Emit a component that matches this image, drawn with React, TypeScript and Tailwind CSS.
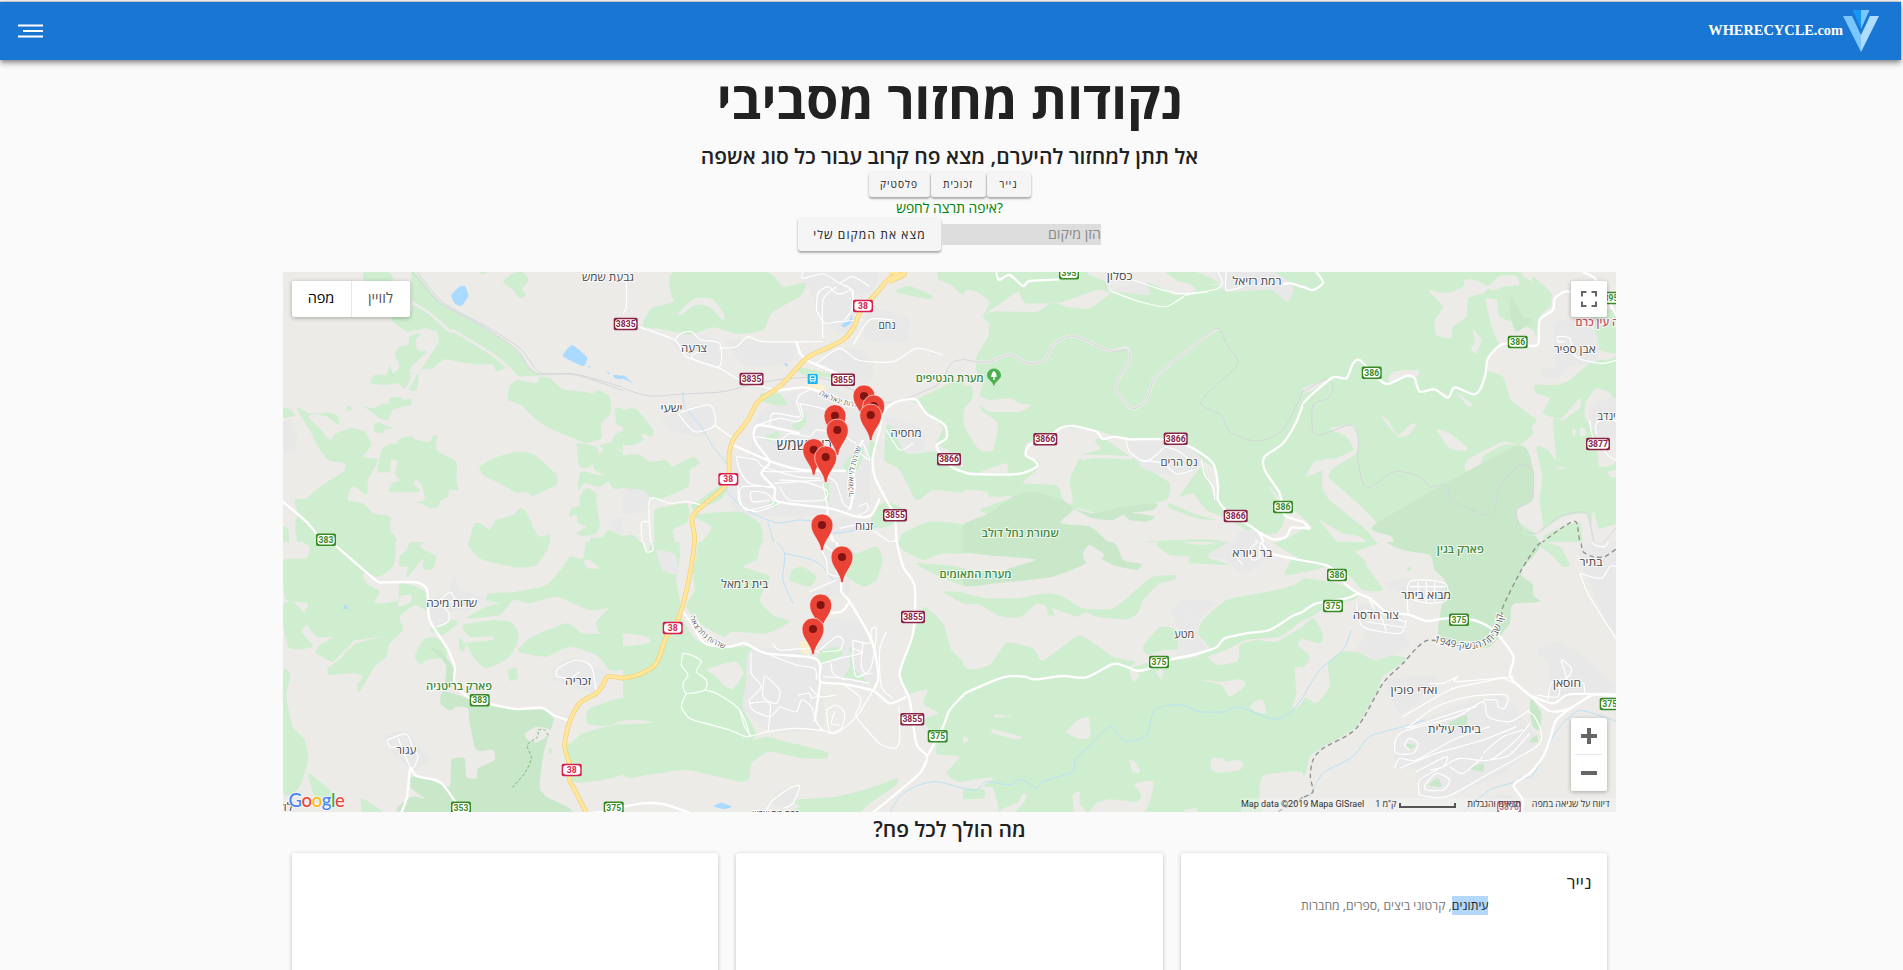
import React from "react";

type Kind = "land" | "green" | "park" | "urban" | "water" | "sand";
type Line = "major" | "minor" | "highway" | "rail" | "stream" | "border" | "trail" | "track";
type Tile = {
  id: string;
  x: number;
  y: number;
  base: Kind;
  areas: [Kind, string[]][];
  lines: [Line, string[]][];
};

const FILL: Record<Kind, string> = {
  land: "#ecebe8",
  green: "#ceeecf",
  park: "#c8e8c9",
  urban: "#e8e8e8",
  water: "#aadaff",
  sand: "#fbf0cf",
};

const STROKE: Record<Line, { color: string; width: number; dash?: string }> = {
  major: { color: "#ffffff", width: 7 },
  minor: { color: "#ffffff", width: 3.5 },
  highway: { color: "#ffe69a", width: 10 },
  rail: { color: "#d3d5da", width: 3 },
  stream: { color: "#b9e0f5", width: 3 },
  border: { color: "#8f8f8f", width: 4, dash: "14 10" },
  trail: { color: "#7db57d", width: 3, dash: "9 6" },
  track: { color: "#ecebe8", width: 9 },
};

function smooth(points: string, closed: boolean): string {
  const p = points.split(" ").map((s) => s.split(",").map(Number));
  const n = p.length;
  const at = (i: number) => (closed ? p[(i + n) % n] : p[Math.max(0, Math.min(n - 1, i))]);
  const t = closed ? 0.09 : 0.13;
  let d = `M${p[0][0]} ${p[0][1]}`;
  for (let i = 0; i < (closed ? n : n - 1); i++) {
    const a = at(i - 1), b = at(i), c = at(i + 1), e = at(i + 2);
    d += `C${b[0] + (c[0] - a[0]) * t} ${b[1] + (c[1] - a[1]) * t} ${c[0] - (e[0] - b[0]) * t} ${c[1] - (e[1] - b[1]) * t} ${c[0]} ${c[1]}`;
  }
  return closed ? d + "Z" : d;
}

const TILES: Tile[] = [
  {
    id: "a", x: 0, y: -2, base: "land",
    areas: [
      ["green", [
        "385,6 410,22 470,95 600,170 700,240 745,300 780,315 700,318 670,295 640,305 630,285 595,283 540,278 485,268 450,295 410,300 405,345 395,363 378,358 400,320 450,240 455,190 430,175 375,185 330,155 325,130 385,125",
        "245,6 318,6 330,40 245,35",
        "380,200 410,190 405,230 430,245 385,290 380,310 395,305 365,355 345,340 305,345 262,340 275,315 310,315 320,285 330,310 350,290 335,250 350,230 375,225",
        "240,408 270,415 300,402 320,400 318,385 345,380 365,390 383,385 385,405 360,410 330,420 315,450 290,445 265,425",
        "275,460 290,458 330,475 305,478 300,490 275,485",
        "188,415 200,408 208,418 195,424",
        "0,415 20,418 38,437 25,440 0,443",
        "40,412 80,430 140,428 165,440 168,465 130,440 95,432 75,440 110,475 140,510 160,490 205,475 245,485 265,525 240,560 285,570 255,630 252,675 215,650 200,660 195,690 240,700 270,730 320,740 322,780 340,805 330,842 65,842 38,790 38,750 45,735 35,690 70,685 110,650 180,605 185,580 135,570 105,530 80,480",
        "285,605 290,560 300,535 325,522 345,520 345,510 380,498 400,510 440,515 450,498 463,497 460,540 515,570 522,600 520,635 528,660 500,660 495,680 475,690 465,710 445,714 415,700 395,698 425,690 418,650 400,628 392,640 410,665 320,665 328,640 350,630 335,610 345,575 325,570 320,605",
        "590,590 640,562 700,546 745,550 785,580 820,615 820,645 750,677 730,665 700,668 650,640 600,615",
        "675,390 680,350 705,330 760,340 770,320 800,325 840,358 900,365 930,370 945,360 980,380 983,430 955,460 955,505 910,518 860,500 800,475 750,440 715,405",
        "565,842 575,762 600,765 620,780 640,750 690,735 712,715 730,725 750,770 770,800 798,795 790,842",
        "883,520 940,530 945,555 920,590 890,590",
        "997,415 1021,420 1021,470 1000,460",
        "988,518 995,495 1010,485 1021,488 1021,542",
        "930,570 960,540 950,525 990,518 1010,545 1021,550 1021,650 990,655 970,620 935,600",
        "890,610 910,605 945,615 990,620 950,650 905,640 885,660",
        "890,680 910,655 940,670 940,700 950,760 940,790 900,798 880,790 910,770 885,760 880,735 860,740 865,715 890,705",
        "915,842 925,805 960,800 975,780 1021,800 1021,842",
        "660,35 690,10 720,6 738,30 718,55 728,75 710,85 690,60",
        "385,842 390,822 430,822 410,842",
        "0,770 15,775 18,820 0,820",
        "590,6 612,6 602,14",
      ]],
      ["urban", ["0,460 25,450 42,490 35,545 0,540", "975,760 1000,745 1021,750 1021,790 985,780"]],
      ["land", ["400,205 438,190 442,215 420,245 400,235", "105,445 135,440 110,470"]],
      ["water", ["505,75 530,50 547,50 556,78 535,108 515,100", "840,258 868,226 912,262 900,288", "992,315 1021,318 1021,328 995,325", "972,306 980,308 976,313", "914,288 924,289 918,293"]],
    ],
    lines: [
      ["track", ["385,97 440,130 500,183 520,187 640,262 700,318", "455,180 460,220 400,300 380,320"]],
      ["rail", ["388,6 470,97 600,170 700,238 735,290 765,313 785,313 880,315 1021,362", "403,6 480,97 620,175 712,236 755,293 785,311 880,313 1021,352"]],
      ["major", ["0,695 70,755 110,800 170,842"]],
    ],
  },
  {
    id: "b", x: 340, y: -2, base: "land",
    areas: [
      ["urban", [
        "155,205 205,185 290,215 290,290 160,240",
        "540,6 760,6 750,60 690,80 700,180 640,190 590,130 560,60",
        "310,210 515,220 500,280 370,285",
        "740,110 820,135 860,150 850,210 790,220 720,200",
        "390,470 420,420 500,370 640,360 720,430 760,490 740,600 740,740 690,720 620,735 360,735 320,670 320,560 380,560",
        "590,280 650,235 720,240 750,280 745,330 700,345 620,290",
        "790,440 900,480 900,540 830,540",
        "130,440 250,400 280,440 240,500 170,490 120,460",
        "630,750 720,740 760,770 640,790",
        "0,670 20,640 80,650 80,720 0,730",
      ]],
      ["green", [
        "155,6 430,6 480,50 548,38 535,75 485,105 445,130 420,180 340,192 270,172 200,195 130,180 60,168 85,115 150,95 142,60",
        "820,60 860,48 925,75 920,88 830,70",
        "945,6 1021,6 1021,75 985,45 950,30",
        "0,425 40,418 90,480 85,500 55,490 60,510 30,525 0,520",
        "0,560 50,555 80,575 130,570 150,590 210,560 230,580 200,600 195,650 100,690 60,660 0,650",
        "205,705 230,690 300,640 315,655 290,690 215,720",
        "210,735 350,725 410,760 420,800 410,842 225,842 250,800 265,770",
        "415,370 470,370 492,400 480,408 430,400 412,385",
        "95,720 130,710 190,700 200,730 190,760 150,780 160,842 120,842 95,810",
        "0,800 30,795 50,815 60,842 0,842",
        "520,290 640,315 620,322 540,315",
        "870,395 940,360 1021,335 1021,575 975,540 940,520 960,470 910,430 880,400",
        "790,470 805,470 850,550 940,545 1021,595 1021,665 930,660 880,690 830,600 785,570",
        "750,720 790,695 850,720 850,750 770,775 745,760",
        "840,790 920,755 1021,765 1021,842 830,842",
        "680,560 720,530 720,560 690,620 660,590",
        "425,500 465,485 470,495 440,515",
        "505,470 530,450 545,425 550,455 530,480",
        "440,695 470,698 460,712 440,708",
        "600,645 618,640 618,700",
        "740,515 765,525 735,575",
      ]],
      ["land", ["165,130 215,85 270,88 305,135 300,150 260,110 215,105 175,135"]],
      ["sand", ["555,335 600,345 608,362 560,355"]],
      ["water", ["655,165 680,150 685,135 688,155 665,172", "0,314 30,340 0,324", "484,280 495,283 490,290"]],
    ],
    lines: [
      ["rail", ["0,355 80,378 180,372 300,365 400,340 500,325 600,325 700,365 780,398 850,385 900,365 950,340 985,280 1021,268"]],
      ["stream", ["180,365 185,410 235,470 270,530 315,590 310,660 370,720 460,758 530,750 610,760 630,790 760,770", "435,760 460,842"]],
      ["minor", [
        "45,170 155,210 190,260 290,295 360,335 470,362",
        "155,210 175,190 205,185 235,210 290,220 288,290 205,262 250,235",
        "290,235 340,230 375,200 420,215 600,215",
        "580,120 605,160 645,155 720,150",
        "580,120 585,70 615,50 640,70 660,70 690,60 685,120 665,150",
        "640,50 600,90 600,205",
        "540,6 540,25 600,12 650,40 685,60 690,120",
        "650,40 690,20 740,50",
        "690,225 740,150 810,150",
        "580,280 650,235 705,270 810,275 880,235 960,255",
        "520,395 530,440 450,430 440,470",
        "520,400 530,375 560,360",
        "530,400 640,430 670,500 700,520",
        "405,465 470,445 520,455 540,440 530,400",
        "400,500 470,510 500,490 560,500 580,480 640,490 660,505",
        "340,560 350,600 380,640 460,655",
        "340,560 400,570 420,590 520,620 590,625",
        "415,600 440,605 620,605",
        "445,650 360,650 350,680 370,720 450,700 430,670 385,665 390,695 440,690",
        "345,640 350,700 400,725 470,700",
        "470,630 540,635 610,660 600,690 500,690 470,650",
        "455,640 600,630",
        "275,465 330,505",
        "165,430 260,405 275,465 215,485 165,430",
        "85,842 80,690 140,700 190,695 235,705",
        "60,842 55,760 80,757",
        "600,640 615,720",
        "600,610 640,640 660,700 680,715",
        "700,540 740,570 715,510",
        "705,710 730,700 735,720 700,740",
        "790,480 830,540 870,520",
        "650,775 720,765 800,815 822,805",
        "10,6 10,110 0,130",
      ]],
      ["major", [
        "520,215 530,245 550,270 640,310 700,345",
        "465,362 545,352 600,370",
        "330,525 450,577 540,600 670,603",
        "1021,605 985,590 940,530 970,505 965,465 910,430 880,390 850,388 810,400 780,430 770,480 750,560 755,620 790,690 815,740 822,842",
        "770,685 745,735 700,740 620,715 465,695 455,655 415,610 440,575 400,520 392,490 410,465 530,490",
        "720,510 690,570 695,650 680,720",
        "615,720 610,755 625,800 645,842",
      ]],
      ["highway", ["842,6 842,15 800,35", "800,6 840,14", "840,16 800,25 760,70 715,120 690,175 660,210 610,235 550,265 475,345 405,395 375,450 330,510 318,560 318,610 300,655 230,715 207,745 215,800 212,842"]],
    ],
  },
  {
    id: "c", x: 680, y: -2, base: "green",
    areas: [
      ["land", [
        "0,75 40,65 80,95 60,140 78,160 75,200 40,260 40,300 60,340 50,375 80,390 140,385 170,400 205,405 170,425 80,425 50,405 60,425 105,460 90,540 50,540 5,470 3,420 30,380 25,345 0,335",
        "55,140 120,95 165,65 190,100 300,95 400,60 440,70 380,115 310,110 270,95 220,125 90,125",
        "380,6 780,6 775,45 700,40 640,6 700,60 640,75 560,40 440,62 430,35",
        "180,640 220,600 230,575 190,555 190,520 300,475 370,480 420,500 410,540 370,550 350,565 320,630 330,690 310,710 290,660 275,645",
        "350,555 440,555 520,560 500,568 400,565 360,570",
        "390,480 490,510 600,510 760,600 755,680 720,590 690,620 650,680 690,670 730,720 790,745 870,790 940,790 965,740 920,650 965,700 1021,745 1021,775 960,810 870,842 760,810 640,810 550,815 540,842 430,842 400,780 340,770 290,755 340,715 400,728 480,712 610,690 620,640 560,600",
        "0,663 70,665 80,680 150,680 100,700 50,720 70,735 0,765",
        "50,608 130,580 130,610",
      ]],
      ["green", ["610,6 700,6 770,38 720,45 650,35", "620,700 690,730 760,750 700,745 620,715", "415,535 395,510 420,505 425,520"]],
      ["urban", [
        "475,50 540,35 560,75 450,62",
        "760,6 930,6 990,50 975,95 920,60 790,65",
        "490,510 640,510 720,570 690,600 640,620 540,595",
        "825,790 880,780 910,842 825,842",
      ]],
      ["park", ["150,680 210,665 300,690 330,720 290,760 380,770 440,820 450,842 0,842 0,765 80,730", "330,715 390,730 480,710 580,700 570,720 490,730 450,750 390,745", "480,725 575,740 550,755 500,750"]],
    ],
    lines: [
      ["track", ["0,268 70,277 140,253 195,280 245,270 270,225 330,198 440,242 490,232 500,270 458,350 505,415 550,390 580,320 720,205 765,175"]],
      ["rail", ["0,268 70,277 140,253 195,280 245,270 270,225 330,198 440,242 490,240 500,270 458,350 505,415 550,390 580,320 720,205 765,175 790,220 825,280 770,335 712,400 775,435 800,485 880,513 960,480 1021,360"]],
      ["minor", [
        "440,62 530,95 610,110 670,75 735,65",
        "490,510 500,545 545,575 580,555 605,530",
        "530,570 600,580 640,612 690,600",
        "605,530 640,540 690,575",
        "510,30 640,70 750,60 778,40 765,6",
        "715,570 725,615 750,650 755,690",
        "790,6 790,60 840,50",
        "860,842 880,810 890,842",
      ]],
      ["major", [
        "100,6 108,30 140,15 180,48 200,33 290,28",
        "0,605 30,612 165,612 222,590 215,572 188,555 200,525 260,500 290,475 330,468 400,485 420,507 455,500 500,508 600,508 680,530 750,580 765,650 765,690 800,730 885,785 910,842",
        "1021,400 1000,455 960,520 905,560 905,600 950,670 965,735 1021,755",
        "885,785 930,808 970,800 985,773 1021,775",
        "960,42 985,40 1021,52",
      ]],
    ],
  },
  {
    id: "d", x: 1020, y: -2, base: "green",
    areas: [
      ["land", [
        "660,6 942,6 942,250 890,270 860,280 800,330 760,345 695,345 700,370 740,385 720,430 775,445 830,385 830,415 780,450 750,450 760,570 735,540 700,530 718,620 710,690 720,770 700,790 640,750 645,710 690,690 690,600 650,530 600,525 540,560 530,600 490,605 485,590 500,565 600,515 650,525 690,490 685,470 700,450 625,390 600,320 550,300 560,260 610,215 700,200 710,140 745,105 735,70 695,40",
        "375,60 430,70 480,50 485,30 510,28 555,50 540,70 495,85 490,140 450,170 445,205 400,195 395,150 420,110",
        "548,90 580,90 590,140 640,160 690,180 700,225 600,235 570,180",
        "555,50 590,18 640,18 648,45 600,50 570,62",
        "232,435 255,450 285,495 320,465 342,460 320,492 285,500",
        "400,478 440,490 490,530 490,543 440,535",
        "510,178 535,210 520,250 503,238 515,215",
        "60,600 90,570 150,540 130,500 80,475 150,465 165,500 160,550 85,600 80,625 130,670 185,720 300,842 240,842 190,780 80,690 58,650",
        "10,620 35,575 100,565 60,600",
        "50,750 120,790 170,800 220,842 130,842 80,790",
        "255,330 270,305 345,300 345,320 310,315 270,335",
        "700,842 690,800 720,780 780,740 850,730 865,770 870,720 890,775 942,765 942,842",
        "850,395 880,355 920,370 942,420 942,570 890,590 880,500 845,440",
        "805,480 818,480 815,502", "830,475 845,475 848,495 832,498",
        "460,365 510,405 495,408", "0,355 70,328 30,360 0,370",
        "760,592 790,592 775,598", "915,605 942,600 942,620 920,622",
        "0,745 25,768 20,778 0,778",
      ]],
      ["green", ["880,115 942,130 942,245 890,240 875,180", "690,20 745,70 740,100 710,110 690,80", "630,80 690,110 680,140 640,170", "720,800 780,770 830,760 835,842 750,842"]],
      ["urban", ["750,160 820,150 880,190 885,270 800,290 760,325 715,320 720,290 760,290", "860,410 942,385 942,500 880,500"]],
      ["park", ["220,760 640,528 690,600 685,690 640,720 660,790 700,800 690,842 300,842 270,800 235,790", "625,80 660,140 690,150 640,185 620,130"]],
    ],
    lines: [
      ["rail", ["0,365 70,328 90,350 75,385 30,405 30,485 60,493 140,465 165,500 165,570 180,640 205,650 275,605 350,620 380,650 430,645 450,690 545,735 575,720 590,650 650,585 690,605 685,690 640,720 655,775 700,790 770,740 850,730 880,830 942,770"]],
      ["minor", ["785,215 765,215 765,200 800,205 810,250 840,270 900,280 942,270", "860,450 870,500 920,560 942,570", "880,495 880,460 910,445 942,455"]],
      ["major", [
        "0,400 30,370 90,322 130,325 150,280 170,270 205,305 250,342 310,318 335,325 350,365 395,358 435,383 455,352 510,373 530,360 548,310 555,265 600,222 690,228 707,215 710,150 750,120 755,85 785,65 810,67",
        "840,6 880,30 942,140",
        "0,50 30,60 60,38 40,6",
        "0,755 20,775 0,772",
      ]],
      ["border", ["695,835 740,800 790,765 820,757 833,842"]],
    ],
  },
  {
    id: "e", x: 0, y: 268, base: "land",
    areas: [
      ["green", [
        "0,60 70,55 80,20 65,0 325,0 332,75 290,110 240,100 250,130 290,155 275,185 300,190 345,180 350,130 400,140 430,160 430,210 395,195 350,230 360,270 320,310 310,350 275,380 230,455 222,435 240,410 210,400 140,405 135,385 180,350 190,325 150,365 100,340 110,315 150,290 100,290 60,230 75,190 10,180 0,120",
        "350,50 370,30 385,0 430,0 410,20 460,50 445,90 420,85 420,55 400,80 370,115 375,80 350,80",
        "0,195 30,185 80,240 55,275 90,320 20,325 0,250",
        "0,400 22,405 10,470 30,560 65,600 75,660 50,740 0,755",
        "75,700 140,750 145,790 100,780",
        "235,775 280,800 300,818 240,818",
        "563,0 795,0 760,75 700,82 600,60 565,30",
        "840,80 860,50 900,55 915,0 1021,0 1021,280 950,280 940,245 975,205 920,210 820,170 740,190 690,180 650,225 550,235 610,200 690,180 660,190 610,180 620,160 700,155 790,135",
        "540,255 640,240 690,250 708,290 680,350 610,385 570,350 555,310 630,300 625,290 560,290",
        "705,330 740,295 850,250 900,280 1021,290 1021,385 980,390 940,345 860,320 790,350 720,340",
        "395,350 420,300 450,290 470,300 490,330 490,350 430,360 415,375",
        "440,270 510,240 525,250 480,285",
        "675,390 700,383 705,415 680,422",
        "1021,475 1021,540 960,558 912,550 915,510 960,490",
        "870,605 900,580 1021,555 1021,700 900,728 865,720 850,680 850,620",
        "530,290 545,310 555,300 540,335 528,325",
      ]],
      ["land", ["350,170 385,165 380,190 345,200", "900,60 920,60 950,85 915,85", "220,300 300,290 220,310 160,365 210,305"]],
      ["park", [
        "480,455 540,470 620,495 700,510 790,510 812,540 795,590 780,650 770,740 790,770 860,818 355,818 385,770 425,775 385,745 385,710 430,715 500,740 505,660 545,655 550,710 580,715 585,685 635,660 630,630 580,630 560,550 555,505 520,500 500,512 472,490",
        "440,325 470,330 495,360 515,390 505,440 485,440 490,380 470,350",
      ]],
      ["land", ["725,582 760,560 803,570 790,590 760,608 735,600"]],
      ["green", ["797,628 806,625 806,640 798,642"]],
      ["urban", [
        "440,180 490,160 515,105 530,150 600,170 560,210 500,215 500,245 460,262 440,240",
        "815,380 870,355 930,380 980,400 960,450 930,460 870,440 810,420",
        "300,590 370,570 400,610 440,660 400,690 370,680 330,640",
      ]],
      ["water", ["180,205 188,195 196,208"]],
    ],
    lines: [
      ["minor", [
        "440,180 470,180 500,157 515,180 480,195 498,220 495,245 460,262",
        "545,185 570,175 580,190",
        "820,410 825,385 880,360 925,380 940,455",
        "820,410 860,415 890,395",
        "312,600 370,582 390,625 405,650 385,685 345,595",
        "312,600 320,620 350,620",
        "920,818 1000,810",
      ]],
      ["major", [
        "150,10 275,118 300,127 400,127 432,150 440,240 490,320 515,380 515,430 560,475 620,492 700,507 775,503 810,525 860,543",
        "355,818 372,770 382,685 400,708 470,725 510,775 525,800",
      ]],
      ["highway", ["1021,415 975,410 960,435 940,460 890,490 858,550 845,620 862,680 860,720 870,740 910,818"]],
      ["trail", ["688,742 725,700 745,655 733,615 765,590 765,570 785,570 800,592"]],
    ],
  },
  {
    id: "f", x: 340, y: 268, base: "land",
    areas: [
      ["green", [
        "0,0 50,0 75,35 90,0 165,0 170,60 160,120 175,210 150,270 110,380 50,420 0,430",
        "0,415 60,400 110,370 130,290 165,225 220,300 300,322 385,325 370,430 360,500 400,580 390,600 430,590 490,605 610,635 610,655 540,655 440,635 385,670 380,715 350,725 190,690 70,705 0,700",
      ]],
      ["urban", [
        "380,330 530,330 590,400 600,560 440,575 360,500 370,430",
        "540,250 640,235 720,260 765,400 740,450 600,420 560,340",
        "590,150 680,110 670,170 560,160",
        "590,20 650,0 680,60 680,160 640,160",
        "100,30 150,40 165,70 160,105 120,90",
        "440,790 470,750 530,740 510,800",
      ]],
      ["green", [
        "220,50 235,0 410,0 410,25 400,60 360,80 440,110 410,180 450,225 500,245 430,280 330,275 300,290 230,250 190,200 215,150 210,100",
        "510,90 540,80 580,110 560,140 500,120",
        "830,0 1021,0 1021,40 960,40 900,60 840,30",
        "660,40 700,40 760,20 780,60 760,120 720,140 660,100",
        "880,70 960,75 1021,85 1021,135 950,110 900,85",
        "960,155 1021,158 1021,190",
        "880,260 905,200 960,250 985,330 1021,368 1021,460 970,520 940,590 900,540 945,520 900,490 915,450 880,455 860,460 830,410 850,330",
        "940,640 960,540 1021,470 1021,720 970,700 1010,650",
        "510,780 640,770 740,745 820,715 820,735 740,790 700,818 500,818 530,800",
        "590,335 640,320 660,345 590,372",
        "680,320 690,330 690,380 740,430 690,415 660,415 680,380",
      ]],
      ["land", ["250,390 290,375 340,365 362,400 330,447 300,435 280,410", "0,542 50,540 90,548 0,552", "0,280 70,290 80,308 0,318"]],
      ["sand", ["533,305 555,305 560,345 535,335"]],
      ["water", ["272,798 295,788 327,800 300,807"]],
    ],
    lines: [
      ["stream", ["455,0 485,40 480,120 510,190", "485,40 580,65 630,120", "800,818 830,770 880,738 940,725 1021,745"]],
      ["minor", [
        "180,340 205,345 235,365 220,395 250,420 245,450 190,460 180,430 195,405 175,375 180,340",
        "190,460 175,500 200,535 240,548 320,570 378,590 350,510 280,460 245,450",
        "350,510 365,560 385,590",
        "378,590 435,575 520,565 600,572 640,580 700,530 750,452",
        "660,432 710,470 710,500 700,530 770,610 815,625 830,600 828,500",
        "385,340 385,400 415,440 380,480 390,510 440,530 470,500",
        "380,490 440,490 435,575",
        "430,410 470,450 460,490 420,470 425,405",
        "470,500 520,515 535,480 565,500 580,545 600,572",
        "525,465 560,460 565,475 590,465",
        "560,440 590,470 640,465",
        "610,510 640,495 665,520 655,565 620,575 610,510",
        "635,515 625,550 650,555",
        "590,330 640,290 660,300 650,330 600,335",
        "592,372 650,355 715,340 690,325",
        "690,300 740,310 745,270 760,265 755,330 740,390 700,410 690,360 690,300",
        "720,310 715,370 725,400 750,400",
        "600,410 660,415 740,430",
        "625,370 630,400 665,420",
        "790,275 770,330 775,440 810,475",
        "450,310 470,330 560,325 590,340",
        "430,340 520,375 575,385 580,420",
        "430,810 450,780 500,745 530,738 510,790 480,805",
        "60,0 70,35 90,30 85,0",
        "590,20 610,60 615,100 650,110",
        "600,10 640,50 640,100",
        "560,155 640,120",
      ]],
      ["major", [
        "175,208 205,250 245,310 320,320 365,310 430,340 565,352 592,375 592,425 660,432 750,452 800,490 850,470",
        "640,0 655,100 655,155 680,185 745,300 762,370 765,420 750,452",
        "820,0 840,80 875,140 870,280 830,400 860,480 880,610 912,650 890,700 820,760 750,818",
        "912,650 960,560 980,510 1021,465",
        "680,185 655,215 600,220",
        "592,425 575,545",
        "0,800 60,790 120,792 200,818",
      ]],
      ["highway", ["215,0 205,80 177,205 150,270 130,290 100,370 50,403 0,415"]],
    ],
  },
  {
    id: "g", x: 680, y: 268, base: "green",
    areas: [
      ["land", [
        "0,0 1021,0 1021,115 960,145 860,165 790,180 720,240 705,280 740,325 700,350 640,360 610,350 500,385 515,365 450,350 350,288 240,362 210,325 130,308 80,375 0,370",
        "735,350 790,330 850,300 950,290 1021,240 1021,258 940,305 880,300 830,315 825,362 765,375",
        "1021,290 1021,330 1005,315",
        "310,575 345,540 378,533 382,590 350,597",
        "500,390 530,400 515,425 502,410", "580,395 600,390 595,420",
        "712,420 780,425 830,418 848,435 800,470 775,435",
        "862,500 875,485 900,480 910,520 880,515",
        "995,385 1021,385 1021,480 1000,505 988,500 1000,460",
        "745,655 780,655 790,665 825,660 842,672 830,690 770,698 745,690",
        "498,660 515,665 532,695 510,697",
        "93,523 150,530 100,532", "88,568 175,590 160,598 90,580", "0,590 18,597 0,612",
        "0,725 80,712 90,718 60,740 90,745 105,818 0,818 0,780 60,775 65,750 0,745",
        "110,812 165,785 180,760 190,765 185,785 150,818",
        "350,755 330,765 330,790 345,818 540,818 572,725 515,732 535,765 520,785 440,778 400,790 375,818 350,790",
        "905,705 1021,698 1021,818 900,818 890,740",
        "660,812 700,805 700,818",
      ]],
      ["park", ["0,0 430,0 480,60 535,72 520,90 450,75 380,40 370,70 270,110 100,130 0,135"]],
      ["land", ["0,40 70,45 215,58 180,72 100,95 0,85", "360,40 380,15 425,45 400,65 370,70"]],
      ["green", [
        "0,160 70,175 160,175 250,160 300,170 360,205 450,205 530,140 570,110 635,105 635,120 590,130 540,180 525,220 490,238 400,230 370,215 340,230 270,205 275,225 255,225 250,200 220,192 170,232 110,228 50,195 0,190",
        "540,320 590,262 640,270 645,325 600,330 555,345",
        "580,15 605,0 720,15 800,0 820,40 740,40 740,55 800,75 680,70 680,50 620,45",
        "965,105 985,60 1021,55 1021,95",
        "930,5 1021,0 1021,60",
      ]],
      ["urban", ["625,215 660,180 765,185 720,225 700,280 735,330 680,350 640,345 650,280", "810,0 900,0 925,50 840,100 790,60 735,45"]],
      ["sand", ["666,226 673,226 671,234"]],
    ],
    lines: [
      ["stream", ["0,745 40,750 70,725 140,735 175,718 220,745 240,725 330,695 335,660 375,622 440,560 485,603 550,585 575,510 650,494 710,515 780,515 830,502 930,537 980,520 1021,470"]],
      ["minor", ["890,0 890,50 870,60 855,35 885,5", "840,75 815,40 840,30"]],
      ["major", ["0,470 10,458 120,412 185,410 215,418 300,408 370,412 450,372 490,380 520,392 550,388 620,360 700,342 760,322 785,295 850,280 920,270 985,230 1021,215", "890,0 925,40 1021,62"]],
      ["border", ["1021,772 940,818"]],
    ],
  },
  {
    id: "h", x: 1020, y: 268, base: "land",
    areas: [
      ["green", [
        "0,0 100,0 180,55 195,85 240,150 180,150 130,100 70,80 0,95",
        "0,15 60,0 240,0 130,40",
        "0,115 100,130 165,160 150,180 90,190 0,240 0,130",
        "0,258 30,235 55,270 60,300 45,310 0,295",
        "0,330 20,350 0,385",
        "75,370 120,335 200,340 310,355 240,410 225,450 160,560 60,620 20,650 10,695 0,700 0,480 40,490 80,440",
        "685,0 770,20 800,75 780,80 740,40",
        "310,85 325,80 320,95",
      ]],
      ["urban", [
        "320,120 430,125 430,190 330,190", "240,130 320,115 320,170",
        "160,190 240,200 310,240 300,280 320,320 220,360 160,330 190,280 150,220",
        "280,600 310,560 460,500 600,470 700,600 600,700 420,770 350,760 340,690 280,680",
        "830,30 942,0 942,300 880,180",
        "700,330 770,305 830,340 920,420 930,450 740,480 740,380",
        "250,420 400,410 350,480 290,520", "550,770 620,765 640,818 550,818",
      ]],
      ["park", [
        "260,0 705,0 655,90 660,110 690,135 690,165 710,185 640,190 625,200 620,250 590,290 560,320 520,325 410,295 410,230 430,130 395,90 380,45 300,30",
        "685,475 715,520 710,570 690,560 680,510", "435,550 490,525 490,555 450,560",
        "678,605 700,585 705,608", "500,685 540,670 540,695", "375,735 405,715 415,740", "310,612 340,615 318,630",
      ]],
    ],
    lines: [
      ["stream", ["145,270 120,330 50,390 0,470", "20,770 60,700 150,650 200,590 300,560 365,540", "480,818 560,750 640,725 650,712 690,705 750,590 800,530 840,512 942,545"]],
      ["minor", [
        "830,100 860,170 942,300", "830,100 895,115 920,80 942,80", "865,0 875,15 905,20 920,0",
        "310,565 400,500 500,470 610,465 605,505 585,500 580,480 540,480",
        "632,430 600,415 520,430 440,450 300,530", "632,410 460,425 465,410 420,430 380,430",
        "275,610 300,575 460,530 540,485 555,530 620,545 680,510",
        "305,560 330,560 450,520 520,500",
        "275,610 280,640 330,640 345,610 320,595 305,615 320,630",
        "275,685 290,655 340,660 450,600 560,560", "290,685 400,640 540,600 640,560",
        "340,695 430,650 420,680 380,690",
        "350,765 350,720 420,680 470,655 560,660 640,600 680,550",
        "365,735 400,700 440,720 420,750 370,750 365,735",
        "350,765 430,770 560,700 700,620 715,580 695,530 675,515",
        "540,640 600,590 660,570", "560,660 620,645 680,580", "440,680 480,700 540,650",
        "735,480 745,430 790,420 775,360 805,385 800,405 790,420 840,430 845,463", "700,465 765,470 770,420",
        "315,220 320,125 425,130 430,180 380,190 330,180", "320,140 428,140", "345,125 345,160", "370,125 370,190", "395,128 395,185",
        "160,190 180,260 290,280 310,240", "180,210 230,225 250,275", "220,215 305,245", "190,245 300,262", "200,180 215,210",
      ]],
      ["major", [
        "0,62 80,80 130,135 165,160 200,175 250,215 320,225 370,243 430,235 510,240 560,262 590,290 632,350 622,410 685,470 740,513 800,505 870,465 942,470",
        "0,215 40,190 130,175 165,160",
        "685,468 750,490 800,463 942,463",
        "810,500 760,540 740,600 720,650 680,700 632,735 660,780 655,818",
      ]],
      ["border", ["735,0 705,15 655,90 600,200 598,235", "400,302 370,302 340,325 300,370 240,430 160,565 60,625 30,660 22,710 30,755 0,772", "835,10 840,35 870,50 905,50 942,25"]],
    ],
  },
];

const LAYERS: Line[] = ["track", "rail", "stream", "minor", "major", "highway", "border", "trail"];

function TileView({ tile }: { tile: Tile }) {
  return (
    <g clipPath={`url(#clip-${tile.id})`}>
      <g transform={`translate(${tile.x} ${tile.y}) scale(0.333333)`}>
        <rect x={0} y={0} width={1021} height={840} fill={FILL[tile.base]} />
        {tile.areas.map(([kind, list], i) => (
          <path key={i} fill={FILL[kind]} d={list.map((s) => smooth(s, true)).join("")} />
        ))}
        {LAYERS.map((layer) =>
          tile.lines.filter(([k]) => k === layer).map(([k, list]) => {
            const d = list.map((s) => smooth(s, false)).join("");
            const s = STROKE[k];
            return (
              <g key={k} fill="none" strokeLinejoin="round">
                {k === "highway" && <path d={d} stroke="#f3cf73" strokeWidth={14} />}
                <path d={d} stroke={s.color} strokeWidth={s.width} strokeDasharray={s.dash} />
              </g>
            );
          })
        )}
      </g>
    </g>
  );
}

const SHIELDS: [string, number, number][] = [
  ["383", 43, 267.7], ["3835", 342.7, 52], ["38", 580, 34], ["3835", 468.5, 107], ["3855", 560, 107.7],
  ["38", 445.3, 207.3], ["3866", 666, 187.3], ["3855", 612, 243.3], ["395", 786, 1.3], ["3866", 762.3, 167.3],
  ["3866", 892.7, 166.7], ["3866", 952.7, 244], ["386", 1000, 235], ["386", 1088.7, 100.7], ["386", 1234.7, 70],
  ["395", 1328, 26], ["3877", 1315, 172], ["383", 196.7, 428.3], ["38", 288.7, 498], ["353", 178, 535.7],
  ["375", 330.7, 535.7], ["38", 389.7, 356], ["3855", 630, 345], ["3855", 629.3, 447.3], ["375", 654.7, 464.3],
  ["375", 876, 390], ["386", 1054, 303], ["375", 1050, 334], ["375", 1176, 347.7], ["375", 1326.7, 432], ["3876", 1226, 535.3],
];

function Shield({ n, x, y }: { n: string; x: number; y: number }) {
  const color = n.length === 2 ? "#d81e4e" : n.length === 3 ? "#388a25" : "#8a2346";
  const w = n.length === 4 ? 24 : 20;
  return (
    <g transform={`translate(${x} ${y})`}>
      <rect x={-w / 2} y={-6.3} width={w} height={12.6} rx={1.8} fill={color} />
      <rect x={-w / 2 + 1.4} y={-4.8} width={w - 2.8} height={9.6} rx={3} fill="#fff" />
      <text y={3} textAnchor="middle" fontSize={8.6} fontWeight={700} fill={color} className="font-['Roboto',sans-serif]">{n}</text>
    </g>
  );
}

type Label = { t: string; x: number; y: number; w?: number; c?: string; s?: number };
const PARK = "#3d8b3d";
const LABELS: Label[] = [
  { t: "גבעת שמש", x: 325, y: 9, w: 52 },
  { t: "צרעה", x: 411, y: 80, w: 26 },
  { t: "נחם", x: 604, y: 57, w: 17 },
  { t: "ישעי", x: 388.5, y: 140, w: 22 },
  { t: "בית שמש", x: 521.5, y: 178, w: 56, s: 15 },
  { t: "מחסיה", x: 623, y: 164.7, w: 31 },
  { t: "זנוח", x: 581, y: 258, w: 18 },
  { t: "מערת הנטיפים", x: 666.7, y: 109.7, w: 68, c: PARK },
  { t: "כסלון", x: 836.7, y: 8, w: 26 },
  { t: "רמת רזיאל", x: 974, y: 13, w: 49 },
  { t: "נס הרים", x: 896, y: 194, w: 37 },
  { t: "שמורת נחל דולב", x: 737.3, y: 264.7, w: 77, c: PARK },
  { t: "אבן ספיר", x: 1291.7, y: 81.3, w: 42 },
  { t: "הדסה עין כרם", x: 1324, y: 53.5, w: 63, c: "#c5526b" },
  { t: "עמינדב", x: 1330, y: 148, w: 31 },
  { t: "בתיר", x: 1308, y: 294, w: 23 },
  { t: "שדות מיכה", x: 168.7, y: 335.3, w: 51 },
  { t: "פארק בריטניה", x: 176, y: 418, w: 66, c: PARK },
  { t: "זכריה", x: 295, y: 413, w: 26 },
  { t: "עגור", x: 123.3, y: 482, w: 20 },
  { t: "לוזית", x: -2, y: 538.7, w: 24 },
  { t: "בית ג'מאל", x: 461.7, y: 315.7, w: 47 },
  { t: "מערת התאומים", x: 692.5, y: 305.7, w: 72, c: PARK },
  { t: "בר גיורא", x: 969.3, y: 284.7, w: 40 },
  { t: "מטע", x: 901.3, y: 365.7, w: 20 },
  { t: "פארק בגין", x: 1177.3, y: 280.7, w: 47, c: PARK },
  { t: "מבוא ביתר", x: 1143, y: 327.3, w: 50 },
  { t: "צור הדסה", x: 1092.7, y: 347.3, w: 46 },
  { t: "ואדי פוכין", x: 1131, y: 422, w: 47 },
  { t: "ביתר עילית", x: 1171.3, y: 460.7, w: 53 },
  { t: "חוסאן", x: 1284, y: 415, w: 28 },
  { t: "רמת בית שמש", x: 493, y: 546, w: 47 },
];

const MARKERS: [number, number][] = [
  [581, 124], [590.7, 134], [587.7, 143], [552, 143.7], [554.3, 158], [530.7, 177.7], [542.7, 185],
  [539, 253], [559, 285], [537.7, 333], [530, 357],
];

function MapCanvas() {
  return (
    <svg width={1333} height={540} viewBox="0 0 1333 540" className="block font-['Open_Sans','Noto_Sans',sans-serif]">
      <defs>
        {TILES.map((t) => (
          <clipPath id={`clip-${t.id}`} key={t.id}>
            <rect x={t.x} y={t.y < 0 ? 0 : 270} width={340} height={270} />
          </clipPath>
        ))}
        <path id="street-1" d="M405 343C410 352 414 366 439 376" />
        <path id="street-2" d="M536 123C545 128 560 134 577 136" />
        <path id="street-3" d="M571 223C568 208 573 190 578 176" />
        <path id="armistice" d="M1153 371C1185 381 1215 382 1220 345" />
      </defs>
      {TILES.map((t) => <TileView key={t.id} tile={t} />)}
      <g fill="#555a60" fontSize={7.5} stroke="#fff" strokeWidth={2} paintOrder="stroke">
        <text textAnchor="middle"><textPath href="#street-1" startOffset="50%">שדרות נחל צאלים</textPath></text>
        <text textAnchor="middle"><textPath href="#street-2" startOffset="50%">שדרות יגאל אלון</textPath></text>
        <text textAnchor="middle"><textPath href="#street-3" startOffset="50%">שדרות לוי אשכול</textPath></text>
        <text textAnchor="middle" fontSize={10}><textPath href="#armistice" startOffset="50%">קו שביתת הנשק-1949</textPath></text>
      </g>
      {SHIELDS.map(([n, x, y], i) => <Shield key={i} n={n} x={x} y={y} />)}
      <g>
        {LABELS.map((l, i) => (
          <text key={i} x={l.x} y={l.y} textAnchor="middle" textLength={l.w} lengthAdjust="spacingAndGlyphs"
            fontSize={l.s ?? 11.5} fontWeight={l.c ? 600 : 500} fill={l.c ?? "#45494e"} stroke="#fff" strokeOpacity={0.8} strokeWidth={2} paintOrder="stroke">
            {l.t}
          </text>
        ))}
      </g>
      <g transform="translate(529.7 107)">
        <rect x={-5} y={-5} width={10} height={10} rx={1} fill="#18b0ee" />
        <path d="M-2.5-3.2h5v5h-5zM-2.5-.4h5M-2 3.5l1-1.4M2 3.5l-1-1.4" fill="none" stroke="#fff" strokeWidth={1} />
      </g>
      <g transform="translate(711 104)">
        <path d="M0 10.5C-1 5-7 3.5-7-.6a7 7 0 0 1 14 0C7 3.5 1 5 0 10.5z" fill="#4caf50" />
        <path d="M0-5C2-4 3 0 2.600 1H.7v3H-.7V1h-1.900C-3 0-2-4 0-5z" fill="#fff" />
      </g>
      {MARKERS.map(([x, y], i) => (
        <g key={i} transform={`translate(${x} ${y})`}>
          <path d="M-1.200 25.500C-1.800 15-11 10-11 0a11 11 0 0 1 22 0C11 10 1.800 15 1.200 25.500z" fill="#ea4335" stroke="#fff" strokeOpacity={0.75} strokeWidth={0.8} />
          <circle r={4} fill="#811411" />
        </g>
      ))}
    </svg>
  );
}

function GoogleLogo() {
  return (
    <div dir="ltr" className="absolute bottom-[2px] left-[6px] font-['Lato',sans-serif] text-[18.5px] leading-[20px] font-medium tracking-[-0.4px] [text-shadow:0_0_2px_#fff,0_0_2px_#fff]">
      <span className="text-[#4285f4]">G</span>
      <span className="text-[#ea4335]">o</span>
      <span className="text-[#fbbc05]">o</span>
      <span className="text-[#4285f4]">g</span>
      <span className="text-[#34a853]">l</span>
      <span className="text-[#ea4335]">e</span>
    </div>
  );
}

function MapPanel() {
  return (
    <section dir="ltr" className="relative h-[540px] w-[1333px] overflow-hidden">
      <MapCanvas />
      <div className="absolute top-[9px] left-[9px] flex h-[36px] w-[118px] rounded-[2px] bg-white text-[14.5px] shadow-[0_1px_4px_rgba(0,0,0,0.3)]">
        <button className="flex w-[59px] items-center justify-center pb-[2px] text-black">מפה</button>
        <button className="flex w-[59px] items-center justify-center border-l border-[#e8e8e8] pb-[2px] text-[#565656]">לוויין</button>
      </div>
      <button className="absolute top-[9px] left-[1288px] flex h-[36px] w-[36px] items-center justify-center rounded-[2px] bg-white shadow-[0_1px_4px_rgba(0,0,0,0.3)]">
        <svg width="16" height="16" viewBox="0 0 16 16" fill="none" stroke="#666" strokeWidth="2">
          <path d="M1 5.500V1h4.500M10.500 1H15v4.500M15 10.500V15h-4.500M5.500 15H1v-4.500" />
        </svg>
      </button>
      <div className="absolute top-[446px] left-[1288px] flex h-[73px] w-[36px] flex-col items-center rounded-[2px] bg-white shadow-[0_1px_4px_rgba(0,0,0,0.3)]">
        <button className="flex h-[36px] w-full items-center justify-center">
          <svg width="16" height="16" viewBox="0 0 16 16" stroke="#666" strokeWidth="4"><path d="M0 8h16M8 0v16" /></svg>
        </button>
        <div className="h-px w-[27px] bg-[#e6e6e6]" />
        <button className="flex h-[36px] w-full items-center justify-center">
          <svg width="16" height="16" viewBox="0 0 16 16" stroke="#666" strokeWidth="4"><path d="M0 8h16" /></svg>
        </button>
      </div>
      <GoogleLogo />
      <div className="absolute right-0 bottom-0 flex h-[14px] items-center bg-[#f5f5f5]/40 pr-[6px] font-['Roboto','Open_Sans',sans-serif] text-[9px] whitespace-nowrap text-[#333]">
        <span>Map data ©2019 Mapa GISrael</span>
        <span className="ml-[11px]">1 ק"מ</span>
        <span className="ml-[3px] h-[5px] w-[57px] border-x-2 border-b-2 border-[#555]" />
        <span className="ml-[11px]">תנאים והגבלות</span>
        <span className="ml-[11px]">דיווח על שגיאה במפה</span>
      </div>
    </section>
  );
}

function Header() {
  return (
    <header className="relative mt-px flex h-[59px] w-[1901px] items-center justify-between border-t border-[#c4c4c4] bg-[#1976d2] pr-[22px] pl-[18px] shadow-[0_2px_4px_-1px_rgba(0,0,0,0.3),0_4px_5px_0_rgba(0,0,0,0.2),0_1px_10px_0_rgba(0,0,0,0.14)]">
      <svg width="25" height="14" viewBox="0 0 25 14" fill="#fff">
        <path d="M0 .4h25v2.200H0zM5 6h20v2H5zM0 11.400h25v2.200H0z" />
      </svg>
      <div className="flex items-center">
        <span className="font-['Liberation_Serif',serif] text-[14.4px] font-bold text-white">WHERECYCLE.com</span>
        <svg width="36" height="42" viewBox="0 0 36 42">
          <path d="M0 6h9l9 19v17z" fill="#7bc6ff" />
          <path d="M36 6h-9l-9 19v17z" fill="#aeddff" />
          <path d="M9.500 0H18v19z" fill="#1697f6" />
          <path d="M26.500 0H18v19z" fill="#7bc6ff" />
        </svg>
      </div>
    </header>
  );
}

const chip = "flex h-[25px] items-center justify-center rounded-[3px] bg-[#f5f5f5] text-[10.2px] tracking-[1px] text-[#222] shadow-[0_2px_2px_rgba(0,0,0,0.22),0_1px_3px_rgba(0,0,0,0.18)]";

export default function App() {
  return (
    <div className="h-[970px] w-[1903px] overflow-hidden bg-[#fafafa] font-['Open_Sans','Noto_Sans',sans-serif] text-[#212121]">
      <Header />
      <main className="flex w-[1899px] flex-col items-center">
        <h1 className="mt-[2px] flex h-[76px] items-center text-[51.7px] leading-none font-bold whitespace-nowrap">נקודות מחזור מסביבי</h1>
        <h2 dir="rtl" className="mt-[4px] flex h-[29px] items-center text-[21px] leading-none font-semibold whitespace-nowrap">אל תתן למחזור להיערם, מצא פח קרוב עבור כל סוג אשפה</h2>
        <div className="mt-[1px] flex gap-px">
          <button className={`${chip} w-[61px]`}>פלסטיק</button>
          <button className={`${chip} w-[55px]`}>זכוכית</button>
          <button className={`${chip} w-[44px]`}>נייר</button>
        </div>
        <p className="mt-[1px] flex h-[20px] items-center text-[13.8px] leading-none whitespace-nowrap text-[#008000]">איפה תרצה לחפש<span>?</span></p>
        <div className="flex h-[33px] items-center">
          <button className="flex h-[33px] w-[143px] items-center justify-center rounded-[3px] bg-[#f5f5f5] text-[12px] tracking-[1.1px] whitespace-nowrap text-[#222] shadow-[0_2px_2px_rgba(0,0,0,0.22),0_1px_3px_rgba(0,0,0,0.18)]">מצא את המקום שלי</button>
          <input dir="rtl" placeholder="הזן מיקום" className="-mt-px h-[21px] w-[160px] bg-[#ddd] text-[14.2px] placeholder:text-[#8a8a8a]" />
        </div>
        <div className="mt-[21px] pr-px"><MapPanel /></div>
        <h2 dir="rtl" className="flex h-[34px] items-center text-[21px] leading-none font-semibold">מה הולך לכל פח?</h2>
        <div className="mt-[7px] grid w-[1333px] grid-cols-3 gap-[18px] px-[8.5px]">
          <article className="h-[300px] rounded-[3px] bg-white shadow-[0_1px_4px_rgba(0,0,0,0.24)]" />
          <article className="h-[300px] rounded-[3px] bg-white shadow-[0_1px_4px_rgba(0,0,0,0.24)]" />
          <article dir="rtl" className="h-[300px] rounded-[3px] bg-white px-[16px] pt-[16px] shadow-[0_1px_4px_rgba(0,0,0,0.24)]">
            <h3 className="h-[27px] text-[17.5px] leading-[26px]">נייר</h3>
            <p className="pr-[103px] text-[12.2px] leading-[19px] whitespace-nowrap text-[#757575]">
              <span className="inline-block bg-[#b3d7fd] text-[#222]">עיתונים</span>, קרטוני ביצים ,ספרים, מחברות
            </p>
          </article>
        </div>
      </main>
    </div>
  );
}
